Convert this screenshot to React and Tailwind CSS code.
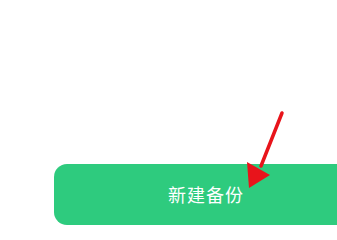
export default function App() {
  return (
    <div className="relative h-[236px] w-[337px] overflow-hidden bg-white">
      {/* BUTTON */}
      <div className="pt-[164px] pl-[54px]">
        <button className="flex h-[61px] w-[304px] items-center justify-center rounded-[13px] bg-[#2ecb7e] text-[18px] font-normal tracking-[1px] text-white [font-family:'Noto_Sans_CJK_SC',sans-serif]">
          新建备份
        </button>
      </div>

      {/* ARROW */}
      <svg className="absolute left-0 top-0" width="337" height="236" viewBox="0 0 337 236">
        <line x1="282" y1="113" x2="261" y2="166" stroke="#e8141b" strokeWidth="3.5" strokeLinecap="round" />
        <polygon points="247,162 270,175 249,188" fill="#e8141b" />
      </svg>
    </div>
  );
}
